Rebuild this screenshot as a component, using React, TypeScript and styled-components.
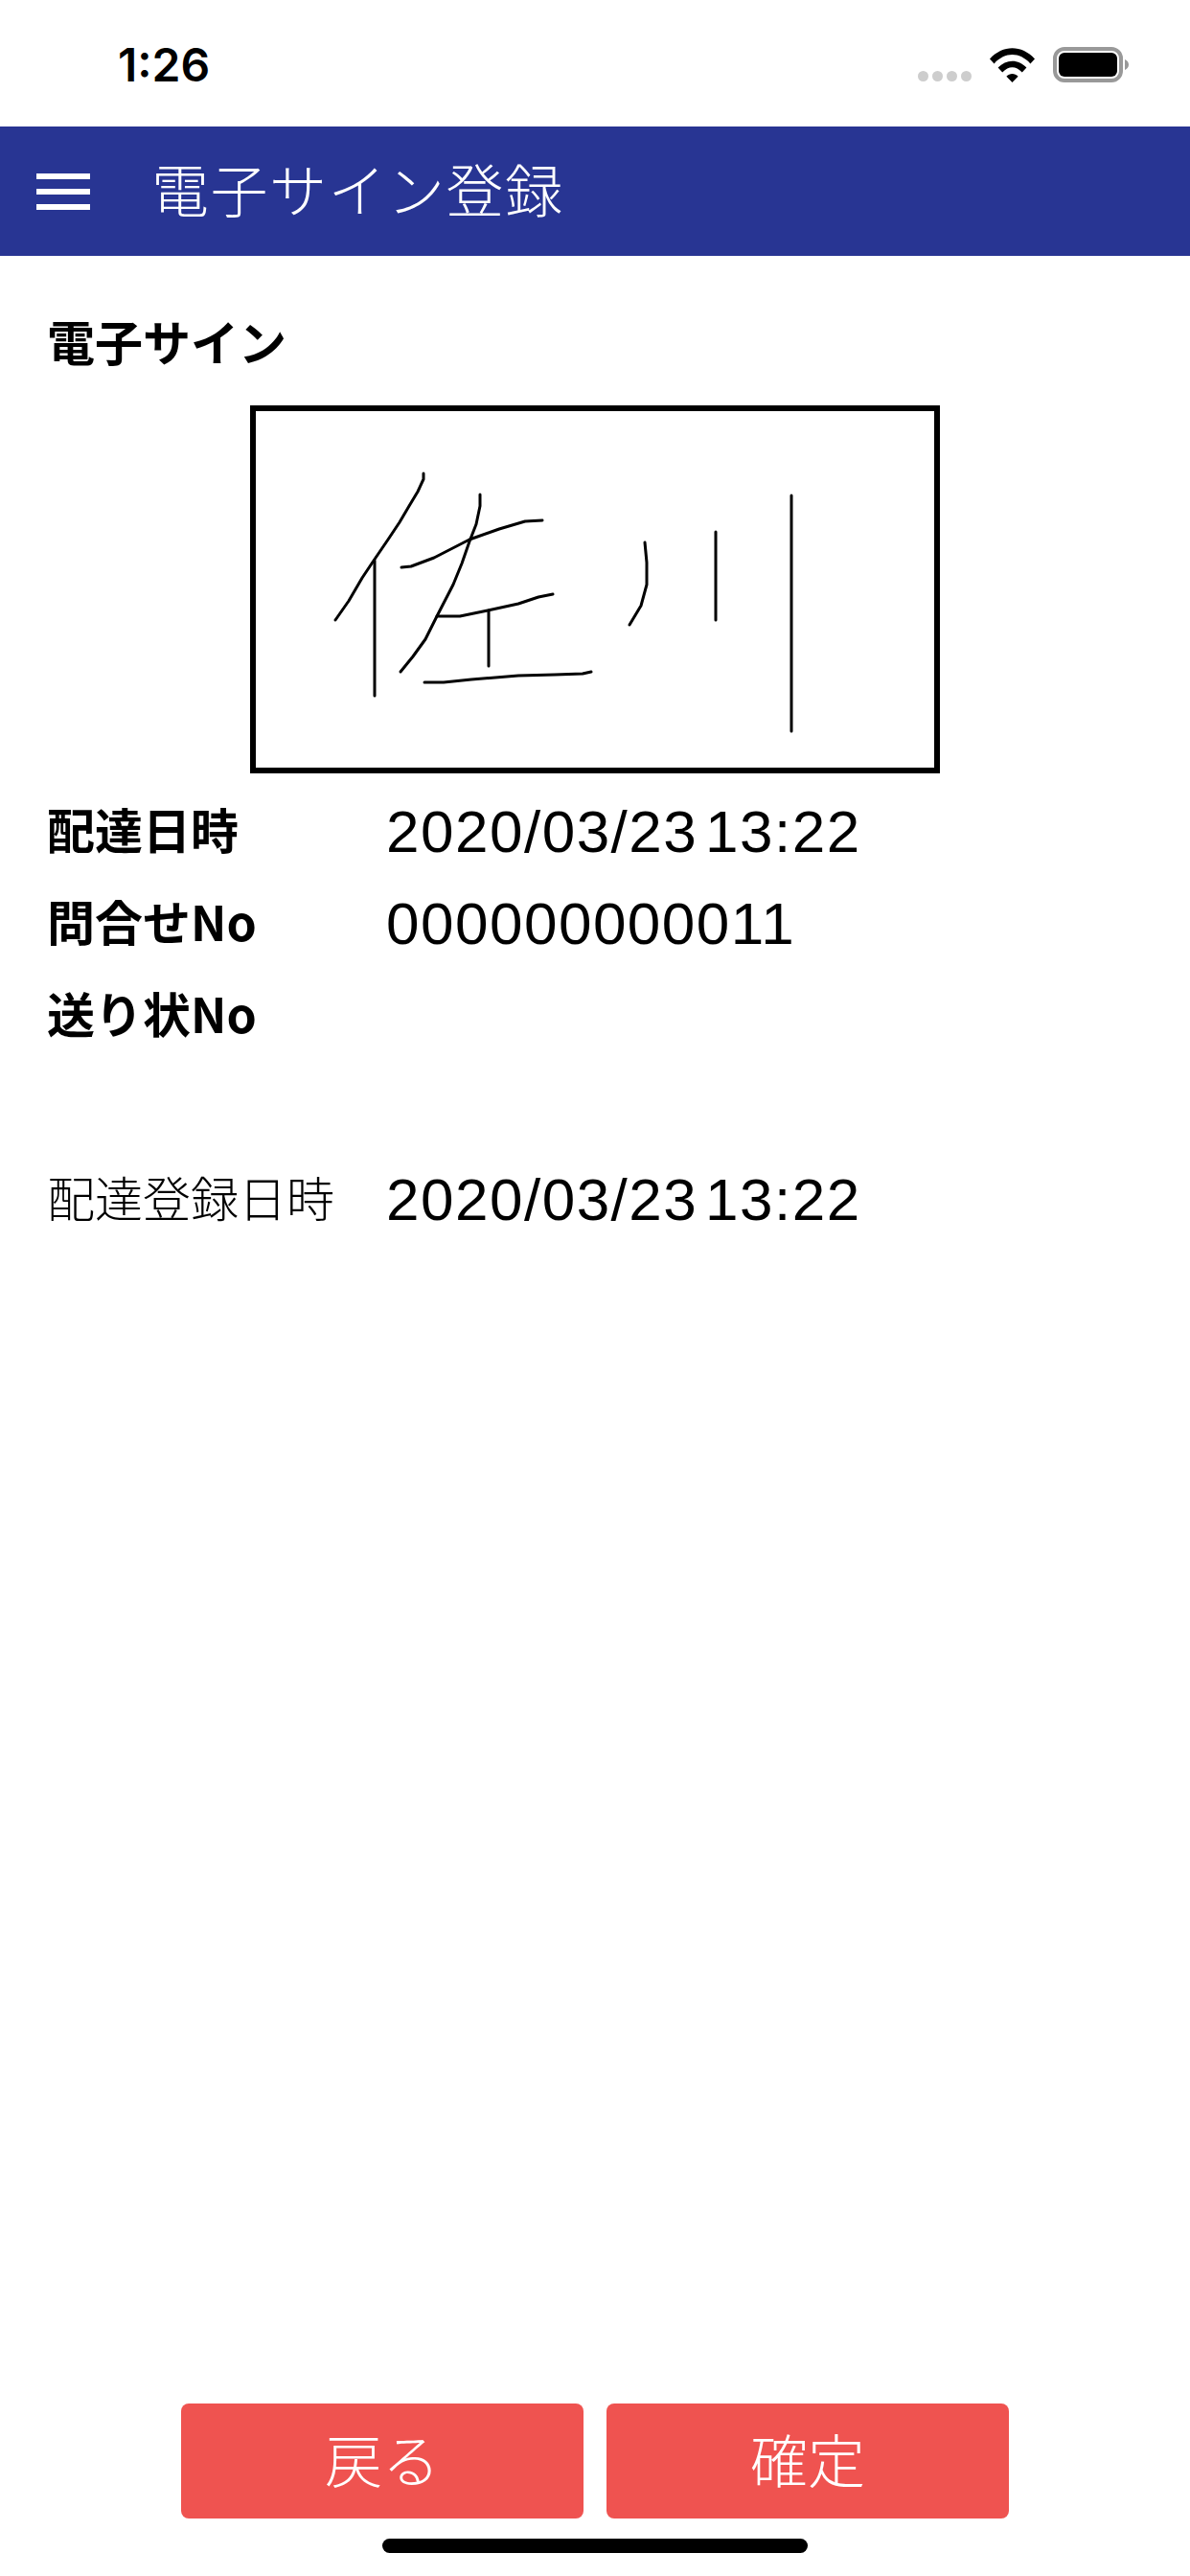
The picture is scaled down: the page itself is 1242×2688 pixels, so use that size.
import * as React from 'react';
import styled, { createGlobalStyle } from 'styled-components';

const GlobalStyle = createGlobalStyle`
    html, body {
        margin: 0;
        padding: 0;
        background: #fff;
    }
    body {
        font-family: "Noto Sans CJK JP", "Liberation Sans", sans-serif;
    }
`;

const Page = styled.div`
    width: 1242px;
    height: 2688px;
    display: flex;
    flex-direction: column;
    background: #fff;
    color: #000;
    overflow: hidden;
`;

const StatusBar = styled.div`
    height: 132px;
    box-sizing: border-box;
    padding: 49px 65px 0 123px;
    display: flex;
    justify-content: space-between;
    align-items: flex-start;
`;

const Clock = styled.span`
    font-family: "Inter", "Liberation Sans", sans-serif;
    font-size: 48px;
    font-weight: 600;
    line-height: 38px;
`;

const StatusIcons = styled.div`
    display: flex;
    align-items: flex-end;
    margin-right: -1px;
`;

const SignalDots = styled.div`
    display: flex;
    gap: 4px;
    margin-right: 19px;
    margin-bottom: 1px;
`;

const Dot = styled.i`
    width: 11px;
    height: 11px;
    border-radius: 50%;
    background: #cdcdcd;
`;

const WifiIcon = styled.svg`
    width: 47px;
    height: 36px;
    margin-right: 19px;
`;

const BatteryIcon = styled.svg`
    width: 79px;
    height: 37px;
`;

const Header = styled.header`
    height: 135px;
    background: #283593;
    display: flex;
    align-items: center;
    padding-left: 38px;
    gap: 64px;
    color: #fff;
`;

const MenuButton = styled.div`
    width: 56px;
    height: 38px;
    display: flex;
    flex-direction: column;
    justify-content: space-between;
    & > span {
        height: 6px;
        background: #fff;
    }
`;

const Title = styled.h1`
    margin: 0 0 8px;
    font-size: 60px;
    font-weight: 300;
    line-height: 80px;
    letter-spacing: 1.5px;
`;

const Content = styled.main`
    flex: 1;
    padding: 58px 49px 0;
`;

const SectionLabel = styled.div`
    font-size: 50px;
    font-weight: 700;
    line-height: 60px;
`;

const SignatureBox = styled.div`
    width: 720px;
    height: 384px;
    box-sizing: border-box;
    border: 6px solid #000;
    margin: 38px auto 13px;
    background: #fff;
    & > svg {
        display: block;
        width: 100%;
        height: 100%;
    }
`;

const InfoRow = styled.div<{ $gap?: boolean }>`
    display: grid;
    grid-template-columns: 356px 1fr;
    align-items: center;
    height: 96px;
    margin-top: ${(props) => (props.$gap ? '96px' : '0')};
`;

const InfoLabel = styled.span<{ $bold?: boolean }>`
    font-size: 50px;
    font-weight: ${(props) => (props.$bold ? 700 : 300)};
    line-height: 60px;
    margin-bottom: 8px;
    white-space: nowrap;
`;

const InfoValue = styled.span`
    font-family: "Liberation Sans", sans-serif;
    font-size: 62px;
    line-height: 70px;
    letter-spacing: 1.5px;
    word-spacing: -11px;
    margin-left: -2px;
`;

const Footer = styled.footer`
    display: flex;
    justify-content: center;
    gap: 24px;
`;

const ActionButton = styled.button`
    width: 420px;
    height: 120px;
    border: 0;
    border-radius: 8px;
    padding: 0 0 6px;
    background: #ef5350;
    color: #fff;
    font-family: inherit;
    font-size: 60px;
    font-weight: 300;
    line-height: 70px;
`;

const HomeIndicator = styled.div`
    width: 444px;
    height: 15px;
    border-radius: 8px;
    background: #000;
    margin: 21px auto 24px;
`;

const strokes = [
    '175,65 175,71 169,84 160,99 150,116 138,134 123,156 111,174 97,198 83,218',
    '124,156 124,297',
    '234,87 234,99 230,118 223,136 215,159 206,181 189,214 177,238 164,256 151,272',
    '152,163 162,162 186,153 223,134 254,123 281,115 299,114',
    '189,214 213,214 242,208 274,201 295,194 310,191',
    '243,208 243,266',
    '176,283 196,283 225,280 274,276 312,275 341,274 350,272',
    '406,137 408,158 408,181 402,203 396,213 390,223',
    '480,126 480,218',
    '559,88 559,334'
];

const Signature = () => (
    <svg viewBox="0 0 708 372" fill="none" stroke="#000" strokeWidth="3" strokeLinecap="round" strokeLinejoin="round">
        {strokes.map((points) => <polyline key={points} points={points} />)}
    </svg>
);

const rows = [
    { label: '配達日時', value: '2020/03/23 13:22', bold: true },
    { label: '問合せNo', value: '000000000011', bold: true },
    { label: '送り状No', value: '', bold: true }
];

export default function App() {
    return (
        <Page>
            <GlobalStyle />
            <StatusBar>
                <Clock>1:26</Clock>
                <StatusIcons>
                    <SignalDots>
                        <Dot /><Dot /><Dot /><Dot />
                    </SignalDots>
                    <WifiIcon viewBox="0 0 47 36">
                        <path d="M0 11.5 C13.5 -3.5 33.5 -3.5 47 11.5 L42.4 16.4 C31 4 16 4 4.6 16.4 Z" />
                        <path d="M8.6 20.6 C17 11.4 30 11.4 38.4 20.6 L33.8 25.5 C27 18.6 20 18.6 13.2 25.5 Z" />
                        <path d="M17.4 29.8 C21 26 26 26 29.6 29.8 L23.5 36 Z" />
                    </WifiIcon>
                    <BatteryIcon viewBox="0 0 79 37">
                        <rect x="2" y="2" width="69" height="33" rx="10" fill="none" stroke="#999" strokeWidth="4" />
                        <rect x="6" y="6" width="61" height="25" rx="6" fill="#000" />
                        <path d="M75 13 C77.5 14 79 16 79 18.5 C79 21 77.5 23 75 24 Z" fill="#999" />
                    </BatteryIcon>
                </StatusIcons>
            </StatusBar>
            <Header>
                <MenuButton>
                    <span /><span /><span />
                </MenuButton>
                <Title>電子サイン登録</Title>
            </Header>
            <Content>
                <SectionLabel>電子サイン</SectionLabel>
                <SignatureBox>
                    <Signature />
                </SignatureBox>
                {rows.map((row) => (
                    <InfoRow key={row.label}>
                        <InfoLabel $bold={row.bold}>{row.label}</InfoLabel>
                        <InfoValue>{row.value}</InfoValue>
                    </InfoRow>
                ))}
                <InfoRow $gap>
                    <InfoLabel>配達登録日時</InfoLabel>
                    <InfoValue>2020/03/23 13:22</InfoValue>
                </InfoRow>
            </Content>
            <Footer>
                <ActionButton>戻る</ActionButton>
                <ActionButton>確定</ActionButton>
            </Footer>
            <HomeIndicator />
        </Page>
    );
}
